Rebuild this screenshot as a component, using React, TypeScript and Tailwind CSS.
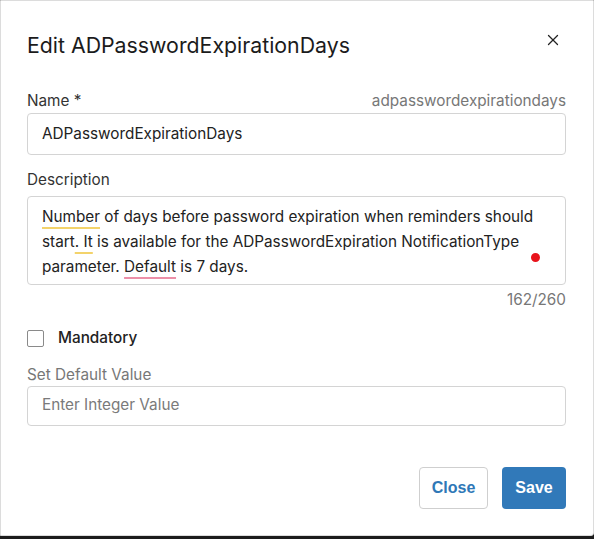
import { X } from "lucide-react";

export default function App() {
  return (
    <div className="w-[594px] h-[539px] bg-[#1c1c1c] font-['Inter',sans-serif]">
      <div className="h-[536px] bg-white border border-[#dcdcdc] rounded-br-[3px] pl-[26px] pr-[27px] flex flex-col">
        <div className="flex items-start justify-between pt-[29px]">
          <h2 className="text-[21.3px] leading-[30px] text-[#1b1b1b] font-normal">
            Edit ADPasswordExpirationDays
          </h2>
          <button type="button" className="mt-[1px] mr-[4px] text-[#222]">
            <X className="w-[18px] h-[18px]" strokeWidth={1.7} />
          </button>
        </div>

        <div className="mt-[32px] flex items-center justify-between text-[15.3px] leading-[18px]">
          <span className="text-[#333]">Name *</span>
          <span className="text-[#777]">adpasswordexpirationdays</span>
        </div>
        <div className="mt-[3px] h-[42px] border border-[#d4d4d4] rounded-[4px] flex items-center px-[14px] text-[15.3px] text-[#222]">
          ADPasswordExpirationDays
        </div>

        <div className="mt-[16px] text-[15.3px] leading-[18px] text-[#333]">Description</div>
        <div className="relative mt-[7px] h-[89px] border border-[#d4d4d4] rounded-[4px] px-[14px] pt-[7px] text-[15.3px] leading-[25px] text-[#222]">
          <p className="pr-[14px]">
            <span className="underline decoration-[#f3d36b] decoration-2 underline-offset-[5px]">Number</span> of days before password expiration when reminders should start
            <span className="underline decoration-[#f3d36b] decoration-2 underline-offset-[5px]">. It</span> is available for the ADPasswordExpiration NotificationType parameter.{" "}
            <span className="underline decoration-[#ec8fa8] decoration-2 underline-offset-[5px]">Default</span> is 7 days.
          </p>
          <span className="absolute right-[25px] top-[56px] w-[9px] h-[9px] rounded-full bg-[#e8131b]" />
        </div>
        <div className="mt-[6px] text-right text-[15.3px] leading-[18px] text-[#777]">162/260</div>

        <label className="mt-[18px] flex items-center gap-[14px]">
          <span className="w-[17px] h-[17px] border border-[#8a8a8a] rounded-[2px] bg-white" />
          <span className="text-[15.3px] font-medium text-[#222]">Mandatory</span>
        </label>

        <div className="mt-[16px] text-[15.3px] leading-[18px] text-[#777]">Set Default Value</div>
        <div className="mt-[2px] h-[40px] border border-[#d4d4d4] rounded-[4px] flex items-center px-[14px] text-[15.3px] text-[#7a7a7a]">
          Enter Integer Value
        </div>

        <div className="mt-[41px] flex justify-end gap-[14px] font-['Liberation_Sans',Arial,sans-serif] text-[16px] font-bold">
          <button type="button" className="w-[69px] h-[42px] border border-[#cfcfcf] rounded-[4px] text-[#2f78b7] bg-white">
            Close
          </button>
          <button type="button" className="w-[64px] h-[42px] rounded-[4px] bg-[#3179b9] text-white">
            Save
          </button>
        </div>
      </div>
    </div>
  );
}
